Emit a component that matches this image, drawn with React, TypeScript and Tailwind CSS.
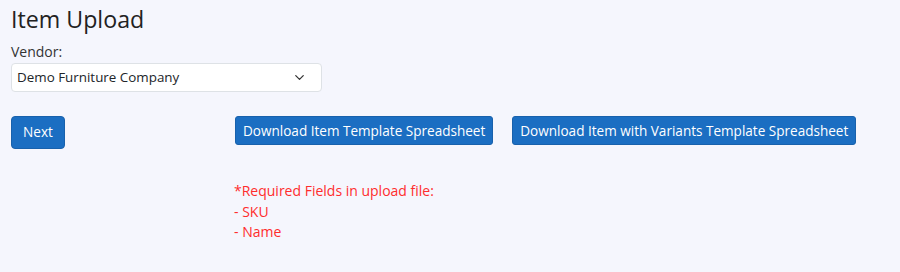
import { ChevronDown } from 'lucide-react';

export default function App() {
  return (
    <div
      className="w-[900px] h-[272px] bg-[#f5f6fd] text-[#212529] px-[11px] pt-[3px]"
      style={{ fontFamily: '"Open Sans", "Noto Sans", sans-serif' }}
    >
      <h1 className="text-[23.2px] leading-[33px] font-normal text-[#222]">Item Upload</h1>
      <div className="mt-[6px] text-[14px] leading-[20px] text-[#333]">Vendor:</div>
      <div className="mt-[1px] w-[311px] h-[29px] bg-white border border-[#dee2e6] rounded-[4px] flex items-center justify-between pl-[5px] pr-[14px] text-[13.4px] text-[#212529]">
        <span>Demo Furniture Company</span>
        <ChevronDown className="size-[15px] text-[#333]" strokeWidth={2} />
      </div>

      <div className="mt-[24px] flex items-start">
        <button className="w-[54px] h-[33px] bg-[#1b6ec2] border border-[#1861ac] rounded-[4px] text-white text-[13.6px]">
          Next
        </button>
        <div className="ml-[170px]">
          <div className="flex gap-[19px]">
            <button className="h-[29px] px-[7px] bg-[#1b6ec2] border border-[#1861ac] rounded-[3px] text-white text-[13.55px] leading-[20px]">
              Download Item Template Spreadsheet
            </button>
            <button className="h-[29px] px-[7px] bg-[#1b6ec2] border border-[#1861ac] rounded-[3px] text-white text-[13.55px] leading-[20px]">
              Download Item with Variants Template Spreadsheet
            </button>
          </div>
          <div className="mt-[36px] -ml-[1px] text-[14px] leading-[20.5px] text-[#ff2d2d]">
            <div>*Required Fields in upload file:</div>
            <div>- SKU</div>
            <div>- Name</div>
          </div>
        </div>
      </div>
    </div>
  );
}
